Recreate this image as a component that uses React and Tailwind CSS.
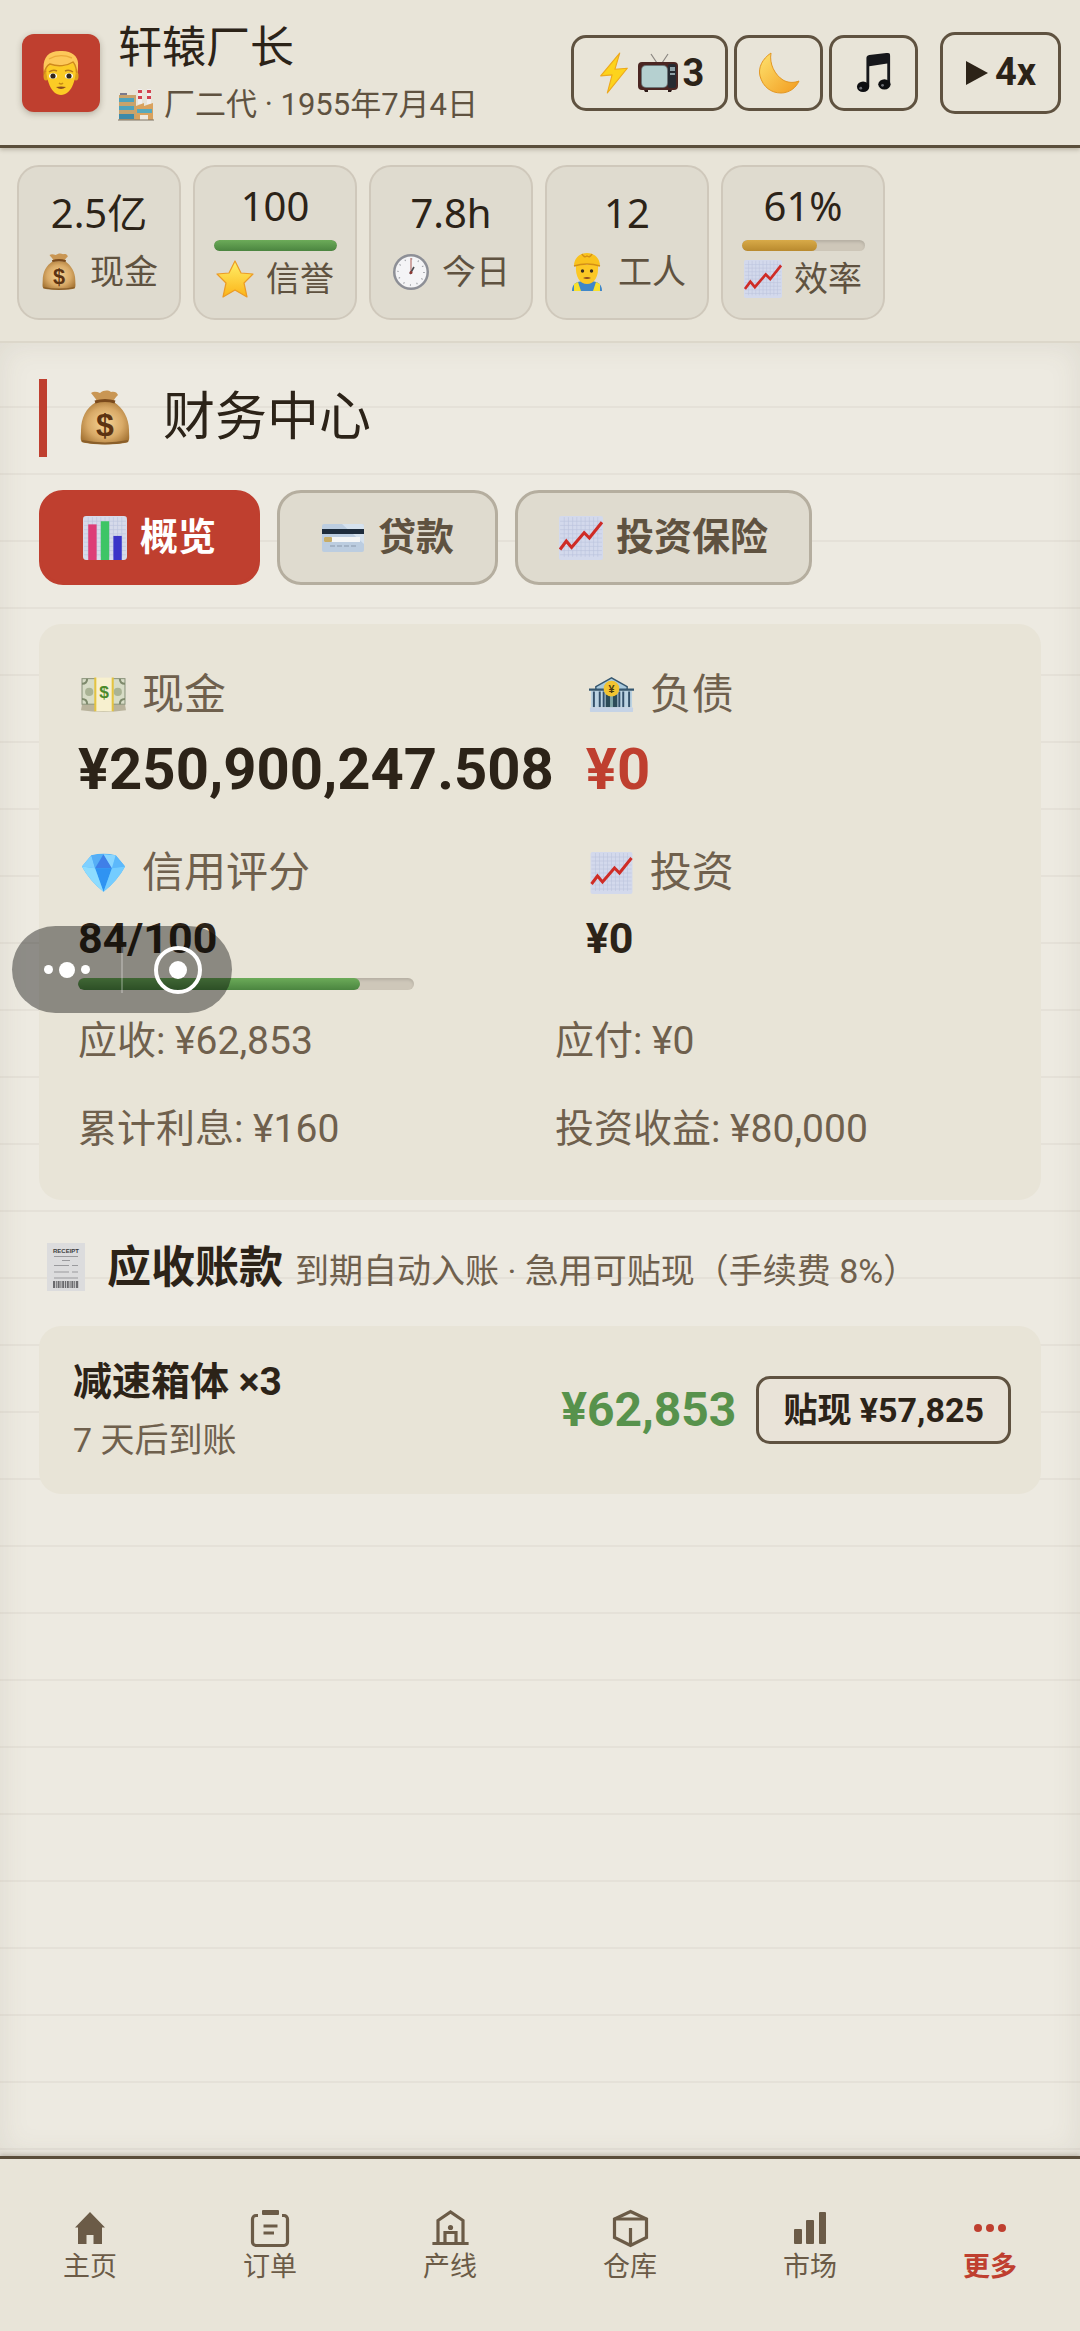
import { useState } from 'react';

const FactoryEmoji = ({ className }) => (
  <svg viewBox="0 0 36 32" className={className} aria-hidden="true">
    <rect x="1" y="6" width="17" height="25" fill="#c9a36c" />
    <rect x="2" y="4" width="7" height="2" fill="#7b7a8c" />
    <rect x="1" y="9" width="15" height="4" fill="#4fa3bd" />
    <rect x="1" y="17" width="15" height="4" fill="#4fa3bd" />
    <rect x="1" y="25" width="15" height="5" fill="#3f8aa8" />
    <rect x="20" y="0" width="4" height="15" fill="#f1eeee" />
    <rect x="29" y="0" width="4" height="15" fill="#f1eeee" />
    <path d="M20 1h4v3h-4zM20 7h4v3h-4zM29 1h4v3h-4zM29 7h4v3h-4z" fill="#d3424e" />
    <path d="M18 17l8-3v3l9-3v17H18z" fill="#d9a25e" />
    <rect x="19" y="20" width="15" height="4" fill="#57a9bd" />
    <rect x="22" y="26" width="8" height="5" fill="#eee9e0" />
    <path d="M0 31h36" stroke="#7c7264" strokeWidth="1" />
  </svg>
);

const ManEmoji = ({ className }) => (
  <svg viewBox="0 0 36 46" className={className} aria-hidden="true">
    <ellipse cx="3" cy="26" rx="2.5" ry="4.5" fill="#e0a11c" />
    <ellipse cx="33" cy="26" rx="2.5" ry="4.5" fill="#e0a11c" />
    <path d="M3 16C3 8 8 5 18 5s15 4 15 12c0 14-5 28-15 28S3 30 3 16z" fill="#fccb25" />
    <path d="M1 24C-1 10 3 1 17 1c12-1 19 6 18 14 0 4 0 6-1 9-1-4-1-8-4-11-8 4-17 4-23 2-3 2-4 5-6 9z" fill="#fdc85a" />
    <path d="M1 24c1-5 2-8 6-10 8 3 17 2 23-2 3 3 3 7 4 11" stroke="#cf8a1a" strokeWidth="1.4" fill="none" />
    <path d="M6 9C13 5 22 5 29 8" stroke="#eba93a" strokeWidth="1.4" fill="none" />
    <path d="M6 22q4-3 8-1M22 21q4-2 8 1" stroke="#b87d1a" strokeWidth="1.5" fill="none" />
    <ellipse cx="10" cy="26" rx="4" ry="2.8" fill="#fff" />
    <ellipse cx="26" cy="26" rx="4" ry="2.8" fill="#fff" />
    <circle cx="10" cy="26" r="2.6" fill="#33261a" />
    <circle cx="26" cy="26" r="2.6" fill="#33261a" />
    <path d="M16 33q2 2 4 0" stroke="#c98c14" strokeWidth="1.5" fill="none" />
    <path d="M13 37q5-1 10 0-5 4-10 0z" fill="#8c4a20" />
  </svg>
);

const BoltEmoji = ({ className }) => (
  <svg viewBox="0 0 40 44" className={className} aria-hidden="true">
    <path d="M26 1L6 25l12-1-5 19 21-26-13 1z" fill="#fdd31c" stroke="#eda91d" strokeWidth="1.2" strokeLinejoin="round" />
  </svg>
);

const TvEmoji = ({ className }) => (
  <svg viewBox="0 0 42 40" className={className} aria-hidden="true">
    <path d="M20 10L14 1M25 10l6-9" stroke="#8a8680" strokeWidth="1.2" />
    <rect x="1" y="9" width="40" height="28" rx="4" fill="#4b2622" />
    <rect x="31" y="11" width="8" height="24" rx="2" fill="#262a31" />
    <rect x="4" y="12" width="27" height="23" rx="5" fill="#6d7779" />
    <rect x="5" y="13" width="25" height="21" rx="4" fill="#b5d0d0" />
    <rect x="33" y="14" width="5" height="4" fill="#8ea0a6" />
    <rect x="33" y="20" width="5" height="2" fill="#8ea0a6" />
    <path d="M7 37h4v2H8zM31 37h4l-1 2h-3z" fill="#2d1a18" />
  </svg>
);

const MoonEmoji = ({ className }) => (
  <svg viewBox="0 0 42 42" className={className} aria-hidden="true">
    <defs>
      <linearGradient id="moon" x1="0" y1="0" x2="1" y2="1">
        <stop offset="0" stopColor="#fee36f" />
        <stop offset="1" stopColor="#f29b1f" />
      </linearGradient>
    </defs>
    <path d="M13 1C4 7 0 16 2 24c3 11 11 17 21 17 8 0 15-5 18-12-5 2-11 2-16-1C17 23 11 12 13 1z" fill="url(#moon)" stroke="#e39722" />
  </svg>
);

const MusicEmoji = ({ className }) => (
  <svg viewBox="0 0 38 42" className={className} aria-hidden="true">
    <path d="M11 6c0-3 1-3 3-4l18-2c3 0 4 0 4 3v30h-3V11L14 14v21h-3z" fill="#16171b" />
    <ellipse cx="7.5" cy="35.5" rx="6.5" ry="5.5" fill="#0d0e11" />
    <ellipse cx="30" cy="33" rx="6.5" ry="5.5" fill="#0d0e11" />
    <circle cx="5" cy="37" r="1.5" fill="#6b6d74" />
    <circle cx="28" cy="34" r="1.5" fill="#6b6d74" />
  </svg>
);

const MoneyBagEmoji = ({ className }) => (
  <svg viewBox="0 0 50 56" className={className} aria-hidden="true">
    <defs>
      <radialGradient id="bag" cx=".5" cy=".5" r=".6">
        <stop offset="0" stopColor="#f7d596" />
        <stop offset=".6" stopColor="#d9aa67" />
        <stop offset="1" stopColor="#a57434" />
      </radialGradient>
    </defs>
    <path d="M11 3c3-2 6-1 9 0 4-3 8-3 11-1 3-1 6 0 7 3-2 2-4 4-5 7H17c-1-4-4-6-6-9z" fill="#c99653" />
    <path d="M16 12C6 18 1 28 1 40c0 6-1 10 1 12 6 3 41 3 46 0 2-2 1-7 1-12 0-12-6-22-15-28z" fill="url(#bag)" />
    <path d="M15 12q10-3 20 0" stroke="#7a4a1c" strokeWidth="3" fill="none" />
    <path d="M2 51q23 5 46 0" stroke="#8a5f2a" strokeWidth="2" fill="none" />
    <text x="25" y="46" textAnchor="middle" fontSize="32" fontWeight="700" fill="#5c3312" fontFamily="Liberation Sans, sans-serif">$</text>
  </svg>
);

const StarEmoji = ({ className }) => (
  <svg viewBox="0 0 38 38" className={className} aria-hidden="true">
    <defs>
      <linearGradient id="star" x1="0" y1="0" x2="0" y2="1">
        <stop offset="0" stopColor="#fff06a" />
        <stop offset="1" stopColor="#fbb418" />
      </linearGradient>
    </defs>
    <path d="M19 1l6 12 12 1-9 9 3 14-12-7-12 7 3-14-9-9 12-1z" fill="url(#star)" stroke="#ec9b25" strokeWidth="1.2" strokeLinejoin="round" />
  </svg>
);

const ClockEmoji = ({ className }) => (
  <svg viewBox="0 0 38 38" className={className} aria-hidden="true">
    <circle cx="19" cy="19" r="18" fill="#8d8f96" />
    <circle cx="19" cy="19" r="15.5" fill="#f4f4f6" />
    <circle cx="19" cy="19" r="13" fill="none" stroke="#9a9ca2" strokeWidth="1.6" strokeDasharray="1 5.8" />
    <path d="M19 21V5" stroke="#b5706b" strokeWidth="1.2" />
    <path d="M18 21l4-7" stroke="#4a4a4e" strokeWidth="1.6" />
    <circle cx="19" cy="19.5" r="1.5" fill="#8e3b36" />
  </svg>
);

const WorkerEmoji = ({ className }) => (
  <svg viewBox="0 0 38 38" className={className} aria-hidden="true">
    <path d="M4 38c0-7 4-9 10-10h10c6 1 10 3 10 10z" fill="#3f87c9" />
    <path d="M6 38v-7l4-2 3 9zM32 38v-7l-4-2-3 9z" fill="#f7e02c" />
    <path d="M8 12h22c1 12-4 19-11 19S7 24 8 12z" fill="#fcc825" />
    <path d="M6 13C6 5 12 0 19 0s13 5 13 13q-13-4-26 0z" fill="#f9c21e" />
    <path d="M14 1q2 4 5 2 3 2 5-2M6 13q13-4 26 0" stroke="#d38f15" strokeWidth="1.5" fill="none" />
    <circle cx="14.5" cy="18" r="1.7" fill="#3a2c20" />
    <circle cx="23.5" cy="18" r="1.7" fill="#3a2c20" />
    <path d="M15 25q4-2 8 0-4 2-8 0z" fill="#8c4a20" />
  </svg>
);

const ChartGrid = () => (
  <path
    d="M5 1v38M9 1v38M13 1v38M17 1v38M21 1v38M25 1v38M29 1v38M33 1v38M37 1v38M1 5h40M1 9h40M1 13h40M1 17h40M1 21h40M1 25h40M1 29h40M1 33h40M1 37h40"
    stroke="#bcc4de"
    strokeWidth=".6"
  />
);

const TrendEmoji = ({ className }) => (
  <svg viewBox="0 0 42 42" className={className} aria-hidden="true">
    <rect x="0" y="0" width="42" height="42" rx="2" fill="#d3d9ec" />
    <ChartGrid />
    <path d="M1 32l6-8 5 6L24 16l5 5L41 6" stroke="#cf2c26" strokeWidth="3" fill="none" />
  </svg>
);

const BarsEmoji = ({ className }) => (
  <svg viewBox="0 0 42 42" className={className} aria-hidden="true">
    <rect x="0" y="0" width="42" height="42" rx="3" fill="#d6daea" />
    <ChartGrid />
    <rect x="5" y="8" width="8" height="34" fill="#dd3d77" />
    <rect x="17" y="5" width="8" height="37" fill="#3dc566" />
    <rect x="29" y="19" width="8" height="23" fill="#3a34c8" />
  </svg>
);

const CardEmoji = ({ className }) => (
  <svg viewBox="0 0 42 28" className={className} aria-hidden="true">
    <rect width="42" height="28" rx="2" fill="#bccde0" />
    <path d="M20 0h20a2 2 0 0 1 2 2v18z" fill="#d6e2ee" />
    <rect y="5" width="42" height="5" fill="#1e2c3c" />
    <rect x="2" y="13" width="36" height="5" fill="#f5f6f6" />
    <rect x="2" y="13" width="8" height="5" rx="1" fill="#c7ad68" />
    <path d="M8 22h28" stroke="#9aaabd" strokeWidth="1.6" strokeDasharray="5 2" />
  </svg>
);

const CashEmoji = ({ className }) => (
  <svg viewBox="0 0 44 34" className={className} aria-hidden="true">
    <path d="M1 26h42l1 6q-22 3-44 0z" fill="#b9b39c" />
    <rect x="1" y="1" width="42" height="25" fill="#d7dcc6" stroke="#8a937a" />
    <circle cx="8" cy="14" r="4" fill="#a9b394" />
    <circle cx="36" cy="14" r="4" fill="#a9b394" />
    <path d="M1 6q5 0 5-5M43 6q-5 0-5-5M1 21q5 0 5 5M43 21q-5 0-5 5" stroke="#7e8a6c" strokeWidth="2" fill="none" />
    <rect x="14" y="0" width="17" height="33" fill="#f7f0cf" />
    <path d="M14 0v33M31 0v33" stroke="#e4c340" strokeWidth="2" />
    <text x="22.5" y="20" textAnchor="middle" fontSize="17" fontWeight="700" fill="#4b8a2a" fontFamily="Liberation Sans, sans-serif">$</text>
  </svg>
);

const BankEmoji = ({ className }) => (
  <svg viewBox="0 0 46 37" className={className} aria-hidden="true">
    <path d="M23 1L7 10v3h32v-3z" fill="#a9c9dc" stroke="#35566e" strokeWidth="1.5" />
    <rect x="2" y="14" width="42" height="17" fill="#bcd3e2" />
    <path d="M0 13h46" stroke="#35566e" strokeWidth="2.5" />
    <path d="M5 15v16M11 15v16M15 15v16M31 15v16M35 15v16M41 15v16" stroke="#34506a" strokeWidth="2" />
    <rect x="17" y="17" width="12" height="14" fill="#2c4b58" />
    <path d="M23 19v12" stroke="#7fa5a6" strokeWidth="3" />
    <rect x="1" y="31" width="44" height="5" rx="1" fill="#c5d3e6" />
    <circle cx="23" cy="12" r="8" fill="#f2c431" />
    <text x="23" y="16" textAnchor="middle" fontSize="11" fontWeight="700" fill="#4a3a10" fontFamily="Liberation Sans, sans-serif">¥</text>
  </svg>
);

const GemEmoji = ({ className }) => (
  <svg viewBox="0 0 48 42" className={className} aria-hidden="true">
    <path d="M11 2q13-3 26 0l10 12q-8 15-23 27Q9 29 1 14z" fill="#47b2fb" />
    <path d="M11 2L1 14l14 2z" fill="#7fd0ff" />
    <path d="M11 2l13-1-9 15z" fill="#56aef6" />
    <path d="M37 2l10 12-14 2z" fill="#5cb8fb" />
    <path d="M24 1L15 16h18z" fill="#3f7fe8" />
    <path d="M24 1l13 1-4 14z" fill="#8ad6ff" />
    <path d="M15 16h18l-9 25z" fill="#2f93f2" />
    <path d="M33 16l14-2q-8 15-23 27z" fill="#74ccff" />
    <path d="M1 14l14 2 9 25Q9 29 1 14z" fill="#8ddcff" />
  </svg>
);

const ReceiptEmoji = ({ className }) => (
  <svg viewBox="0 0 38 48" className={className} aria-hidden="true">
    <rect width="38" height="48" fill="#dcdcdd" />
    <text x="19" y="10" textAnchor="middle" fontSize="6" fontWeight="700" fill="#3c3c3e" fontFamily="Liberation Sans, sans-serif">RECEIPT</text>
    <path d="M7 13.5h24M15 17.5h8M7 22.5h15M25 22.5h6M7 29h15M25 29h6M7 35h24" stroke="#9a9a9d" strokeWidth="1" />
    <path d="M6 41.5h26" stroke="#6b6b6e" strokeWidth="7" strokeDasharray="2 .8 1 .8" />
  </svg>
);

const HomeIcon = () => (
  <path d="M22 5L7 20.5h3V37h8.5v-9h7v9H34V20.5h3z" fill="currentColor" />
);

const OrdersIcon = () => (
  <g fill="none" stroke="currentColor" strokeWidth="3.2">
    <path d="M10 8.5H8A3.5 3.5 0 0 0 4.5 12v23A3.5 3.5 0 0 0 8 38.5h28a3.5 3.5 0 0 0 3.5-3.5V12A3.5 3.5 0 0 0 36 8.5h-2" />
    <rect x="14" y="3" width="17" height="5" rx="1" fill="currentColor" stroke="none" />
    <path d="M15.5 19h14M15.5 26H26" />
  </g>
);

const LinesIcon = () => (
  <g fill="none" stroke="currentColor" strokeWidth="3.2">
    <path d="M10 36V13.5L22.5 5 35 13.5V36" />
    <path d="M6 36.5h33" strokeLinecap="square" />
    <path d="M17 36V25.5h11V36" />
    <circle cx="22.5" cy="20.5" r="2.6" fill="currentColor" stroke="none" />
  </g>
);

const WarehouseIcon = () => (
  <g fill="none" stroke="currentColor" strokeWidth="3.2">
    <path d="M22.5 4.5l16 7.5v18.5l-16 8-16-8V12z" />
    <path d="M6.5 12h32M22.5 21v17.5" />
  </g>
);

const MarketIcon = () => (
  <g fill="currentColor">
    <rect x="6" y="22" width="8" height="15" rx="1" />
    <rect x="18" y="13" width="8" height="24" rx="1" />
    <rect x="31" y="5" width="7" height="32" rx="1" />
  </g>
);

const MoreIcon = () => (
  <g fill="currentColor">
    <circle cx="10" cy="21" r="4" />
    <circle cx="22" cy="21" r="4" />
    <circle cx="34" cy="21" r="4" />
  </g>
);

const stats = [
  { value: '2.5亿', label: '现金', Icon: MoneyBagEmoji },
  { value: '100', label: '信誉', Icon: StarEmoji, percent: 100, fill: 'from-[#6cab59] to-[#4b8540]' },
  { value: '7.8h', label: '今日', Icon: ClockEmoji },
  { value: '12', label: '工人', Icon: WorkerEmoji },
  { value: '61%', label: '效率', Icon: TrendEmoji, percent: 61, fill: 'from-[#d8aa48] to-[#b98a2e]' },
];

const tabs = [
  { id: 'overview', label: '概览', Icon: BarsEmoji, size: 'h-[44px]' },
  { id: 'loan', label: '贷款', Icon: CardEmoji, size: 'h-[28px]' },
  { id: 'invest', label: '投资保险', Icon: TrendEmoji, size: 'h-[44px]' },
];

const navItems = [
  { id: 'home', label: '主页', Icon: HomeIcon },
  { id: 'orders', label: '订单', Icon: OrdersIcon },
  { id: 'lines', label: '产线', Icon: LinesIcon },
  { id: 'warehouse', label: '仓库', Icon: WarehouseIcon },
  { id: 'market', label: '市场', Icon: MarketIcon },
  { id: 'more', label: '更多', Icon: MoreIcon },
];

const Progress = ({ label, percent, fill, className }) => (
  <div
    role="progressbar"
    aria-label={label}
    aria-valuenow={percent}
    className={`rounded-full overflow-hidden bg-[#cec7b9] shadow-[inset_0_2px_3px_rgba(0,0,0,0.12)] ${className}`}
  >
    <div className={`h-full rounded-full bg-linear-to-b ${fill}`} style={{ width: `${percent}%` }}></div>
  </div>
);

const Metric = ({ Icon, label, children }) => (
  <div>
    <div className="flex items-center gap-4 pl-[3px] text-[42px] leading-[60px] text-[#6f604d]">
      <Icon className="w-[45px] h-[42px]" />
      <span>{label}</span>
    </div>
    {children}
  </div>
);

const App = () => {
  const [tab, setTab] = useState('overview');
  const [page, setPage] = useState('more');

  return (
    <div className="relative min-h-screen flex flex-col bg-[#edeae1] text-[#2c2318] font-[Roboto,'Noto_Sans_CJK_SC',sans-serif]">
      {/* Header */}
      <header className="relative flex items-center pl-[22px] pr-[19px] py-[14px] bg-[#e8e4d8] border-b-[3px] border-[#5a4e3b] shadow-[0_2px_4px_rgba(60,50,30,0.25)]">
        <div className="flex items-center justify-center size-[78px] rounded-xl bg-[#bf3f2f] shadow-[0_2px_6px_rgba(60,50,30,0.3)]">
          <ManEmoji className="w-[36px] h-[46px]" />
        </div>
        <div className="flex-1 ml-[18px] pt-1">
          <h1 className="text-[44px] leading-[60px]">轩辕厂长</h1>
          <p className="flex items-center gap-[10px] text-[31px] leading-[53px] text-[#5f5240]">
            <FactoryEmoji className="w-[36px] h-[32px]" />
            <span>厂二代 · 1955年7月4日</span>
          </p>
        </div>
        <div className="flex items-center gap-[6px] text-[38px] font-bold">
          <button aria-label="加速" className="flex items-center justify-center w-[157px] h-[76px] rounded-[15px] border-[3px] border-[#5f5240]">
            <BoltEmoji className="w-[38px] h-[44px]" />
            <TvEmoji className="w-[42px] h-[40px] ml-1" />
            <span className="ml-1 leading-[44px]">3</span>
          </button>
          <button aria-label="夜间" className="flex items-center justify-center w-[89px] h-[76px] rounded-[15px] border-[3px] border-[#5f5240]">
            <MoonEmoji className="size-[42px]" />
          </button>
          <button aria-label="音乐" className="flex items-center justify-center w-[89px] h-[76px] rounded-[15px] border-[3px] border-[#5f5240]">
            <MusicEmoji className="w-[36px] h-[42px]" />
          </button>
          <button className="flex items-center justify-center gap-[6px] w-[121px] h-[82px] ml-4 rounded-[15px] border-[3px] border-[#5f5240]">
            <svg viewBox="0 0 24 24" className="size-[24px]" aria-hidden="true">
              <path d="M1 0l22 12L1 24z" fill="currentColor" />
            </svg>
            4x
          </button>
        </div>
      </header>

      {/* Stats */}
      <section className="flex gap-3 px-[17px] pt-[17px] pb-[21px] bg-[#e8e4d8] border-b-2 border-[#dcd7ca]">
        {stats.map(({ value, label, Icon, percent, fill }) => (
          <div
            key={label}
            className="flex flex-col items-center justify-center w-[164px] h-[155px] pb-1 rounded-[22px] border-2 border-[#cfc8bb] bg-[#dfdbcf]"
          >
            <div className="text-[40px] leading-[57px] font-['Noto_Sans','Noto_Sans_CJK_SC',sans-serif]">{value}</div>
            {percent && <Progress label={label} percent={percent} fill={fill} className="w-[123px] h-[11px] mt-[6px] mb-[3px]" />}
            <div
              className={`flex items-center gap-3 text-[34px] leading-[50px] text-[#5f5240] ${
                percent ? '' : 'mt-[6px]'
              }`}
            >
              <Icon className="size-[38px]" />
              <span>{label}</span>
            </div>
          </div>
        ))}
      </section>

      {/* Content */}
      <main className="flex-1 px-[39px] pt-[36px] bg-[repeating-linear-gradient(to_bottom,transparent_0px,transparent_63px,#e5e1d8_63px,#e5e1d8_65px,transparent_65px,transparent_67px)] shadow-[inset_0_0_30px_rgba(90,80,60,0.1)]">
        <h2 className="flex items-center gap-[33px] h-[78px] pl-[33px] border-l-8 border-[#bf3f2f] text-[52px]">
          <MoneyBagEmoji className="w-[50px] h-[56px]" />
          <span>财务中心</span>
        </h2>

        <div className="flex gap-[17px] mt-[33px]">
          {tabs.map(({ id, label, Icon, size }) => (
            <button
              key={id}
              onClick={() => setTab(id)}
              className={`flex items-center gap-[13px] h-[95px] px-[41px] rounded-3xl border-[3px] text-[38px] font-bold ${
                tab === id
                  ? 'bg-[#bf3f2f] border-[#bf3f2f] text-white'
                  : 'bg-[#dfdbcf] border-[#b5ae9f] text-[#5f5240]'
              }`}
            >
              <Icon className={`w-[44px] ${size}`} />
              <span>{label}</span>
            </button>
          ))}
        </div>

        <section className="mt-[39px] px-[39px] pt-[41px] pb-[42px] rounded-[22px] bg-[#e8e4d7]">
          <div className="grid grid-cols-[max-content_1fr] gap-x-8 gap-y-[30px]">
            <Metric Icon={CashEmoji} label="现金">
              <p className="text-[58px] leading-[88px] font-bold">¥250,900,247.508</p>
            </Metric>
            <Metric Icon={BankEmoji} label="负债">
              <p className="text-[58px] leading-[88px] font-bold text-[#bf3f2f]">¥0</p>
            </Metric>
            <Metric Icon={GemEmoji} label="信用评分">
              <p className="text-[43px] leading-[70px] font-bold">84/100</p>
              <Progress label="信用评分" percent={84} fill="from-[#6cab59] to-[#4b8540]" className="w-[336px] h-[12px] mt-[5px]" />
            </Metric>
            <Metric Icon={TrendEmoji} label="投资">
              <p className="text-[43px] leading-[70px] font-bold">¥0</p>
            </Metric>
          </div>
          <div className="grid grid-cols-2 gap-[30px] mt-[22px] text-[39px] leading-[58px] text-[#6f604d]">
            <p>应收: ¥62,853</p>
            <p>应付: ¥0</p>
            <p>累计利息: ¥160</p>
            <p>投资收益: ¥80,000</p>
          </div>
        </section>

        <h3 className="flex items-center mt-[37px] pl-2 h-[60px] leading-[60px]">
          <ReceiptEmoji className="w-[38px] h-[48px]" />
          <span className="flex items-baseline gap-3 ml-[22px] pt-1">
            <span className="text-[44px] font-bold">应收账款</span>
            <span className="text-[34px] font-normal text-[#6f604d]">到期自动入账 · 急用可贴现（手续费 8%）</span>
          </span>
        </h3>

        <section className="flex items-center mt-[29px] pl-[34px] pr-[30px] py-[26px] rounded-[22px] bg-[#e8e4d7]">
          <div className="flex-1">
            <p className="text-[39px] leading-[60px] font-bold">减速箱体 ×3</p>
            <p className="text-[34px] leading-[56px] text-[#6f604d]">7 天后到账</p>
          </div>
          <span className="text-[48px] font-bold text-[#57924c]">¥62,853</span>
          <button className="ml-5 h-[68px] px-6 rounded-[14px] border-[3px] border-[#5f5240] bg-[#e9e3d8] text-[34px] leading-[62px] font-bold">
            贴现 ¥57,825
          </button>
        </section>
      </main>

      {/* Bottom navigation */}
      <nav className="relative grid grid-cols-6 bg-[#e8e4d8] border-t-[3px] border-[#5a4e3b] shadow-[0_-2px_4px_rgba(60,50,30,0.2)]">
        {navItems.map(({ id, label, Icon }) => (
          <button
            key={id}
            onClick={() => setPage(id)}
            className={`flex flex-col items-center py-12 text-[27px] leading-[32px] ${
              page === id ? 'text-[#bf3f2f] font-bold' : 'text-[#6b5b47]'
            }`}
          >
            <svg viewBox="0 0 44 44" className="size-[44px]" aria-hidden="true">
              <Icon />
            </svg>
            {label}
          </button>
        ))}
      </nav>

      {/* Floating capsule */}
      <div className="absolute left-3 top-[926px] flex items-center w-[220px] h-[87px] rounded-full bg-black/40">
        <button aria-label="菜单" className="flex-1 flex items-center justify-center gap-[6px]">
          <span className="size-[9px] rounded-full bg-white"></span>
          <span className="size-[16px] rounded-full bg-white"></span>
          <span className="size-[9px] rounded-full bg-white"></span>
        </button>
        <span className="w-[2px] h-[46px] bg-white/25"></span>
        <button aria-label="关闭" className="flex-1 flex items-center justify-center">
          <span className="flex items-center justify-center size-[48px] rounded-full border-4 border-white">
            <span className="size-[18px] rounded-full bg-white"></span>
          </span>
        </button>
      </div>
    </div>
  );
};

export default App;
